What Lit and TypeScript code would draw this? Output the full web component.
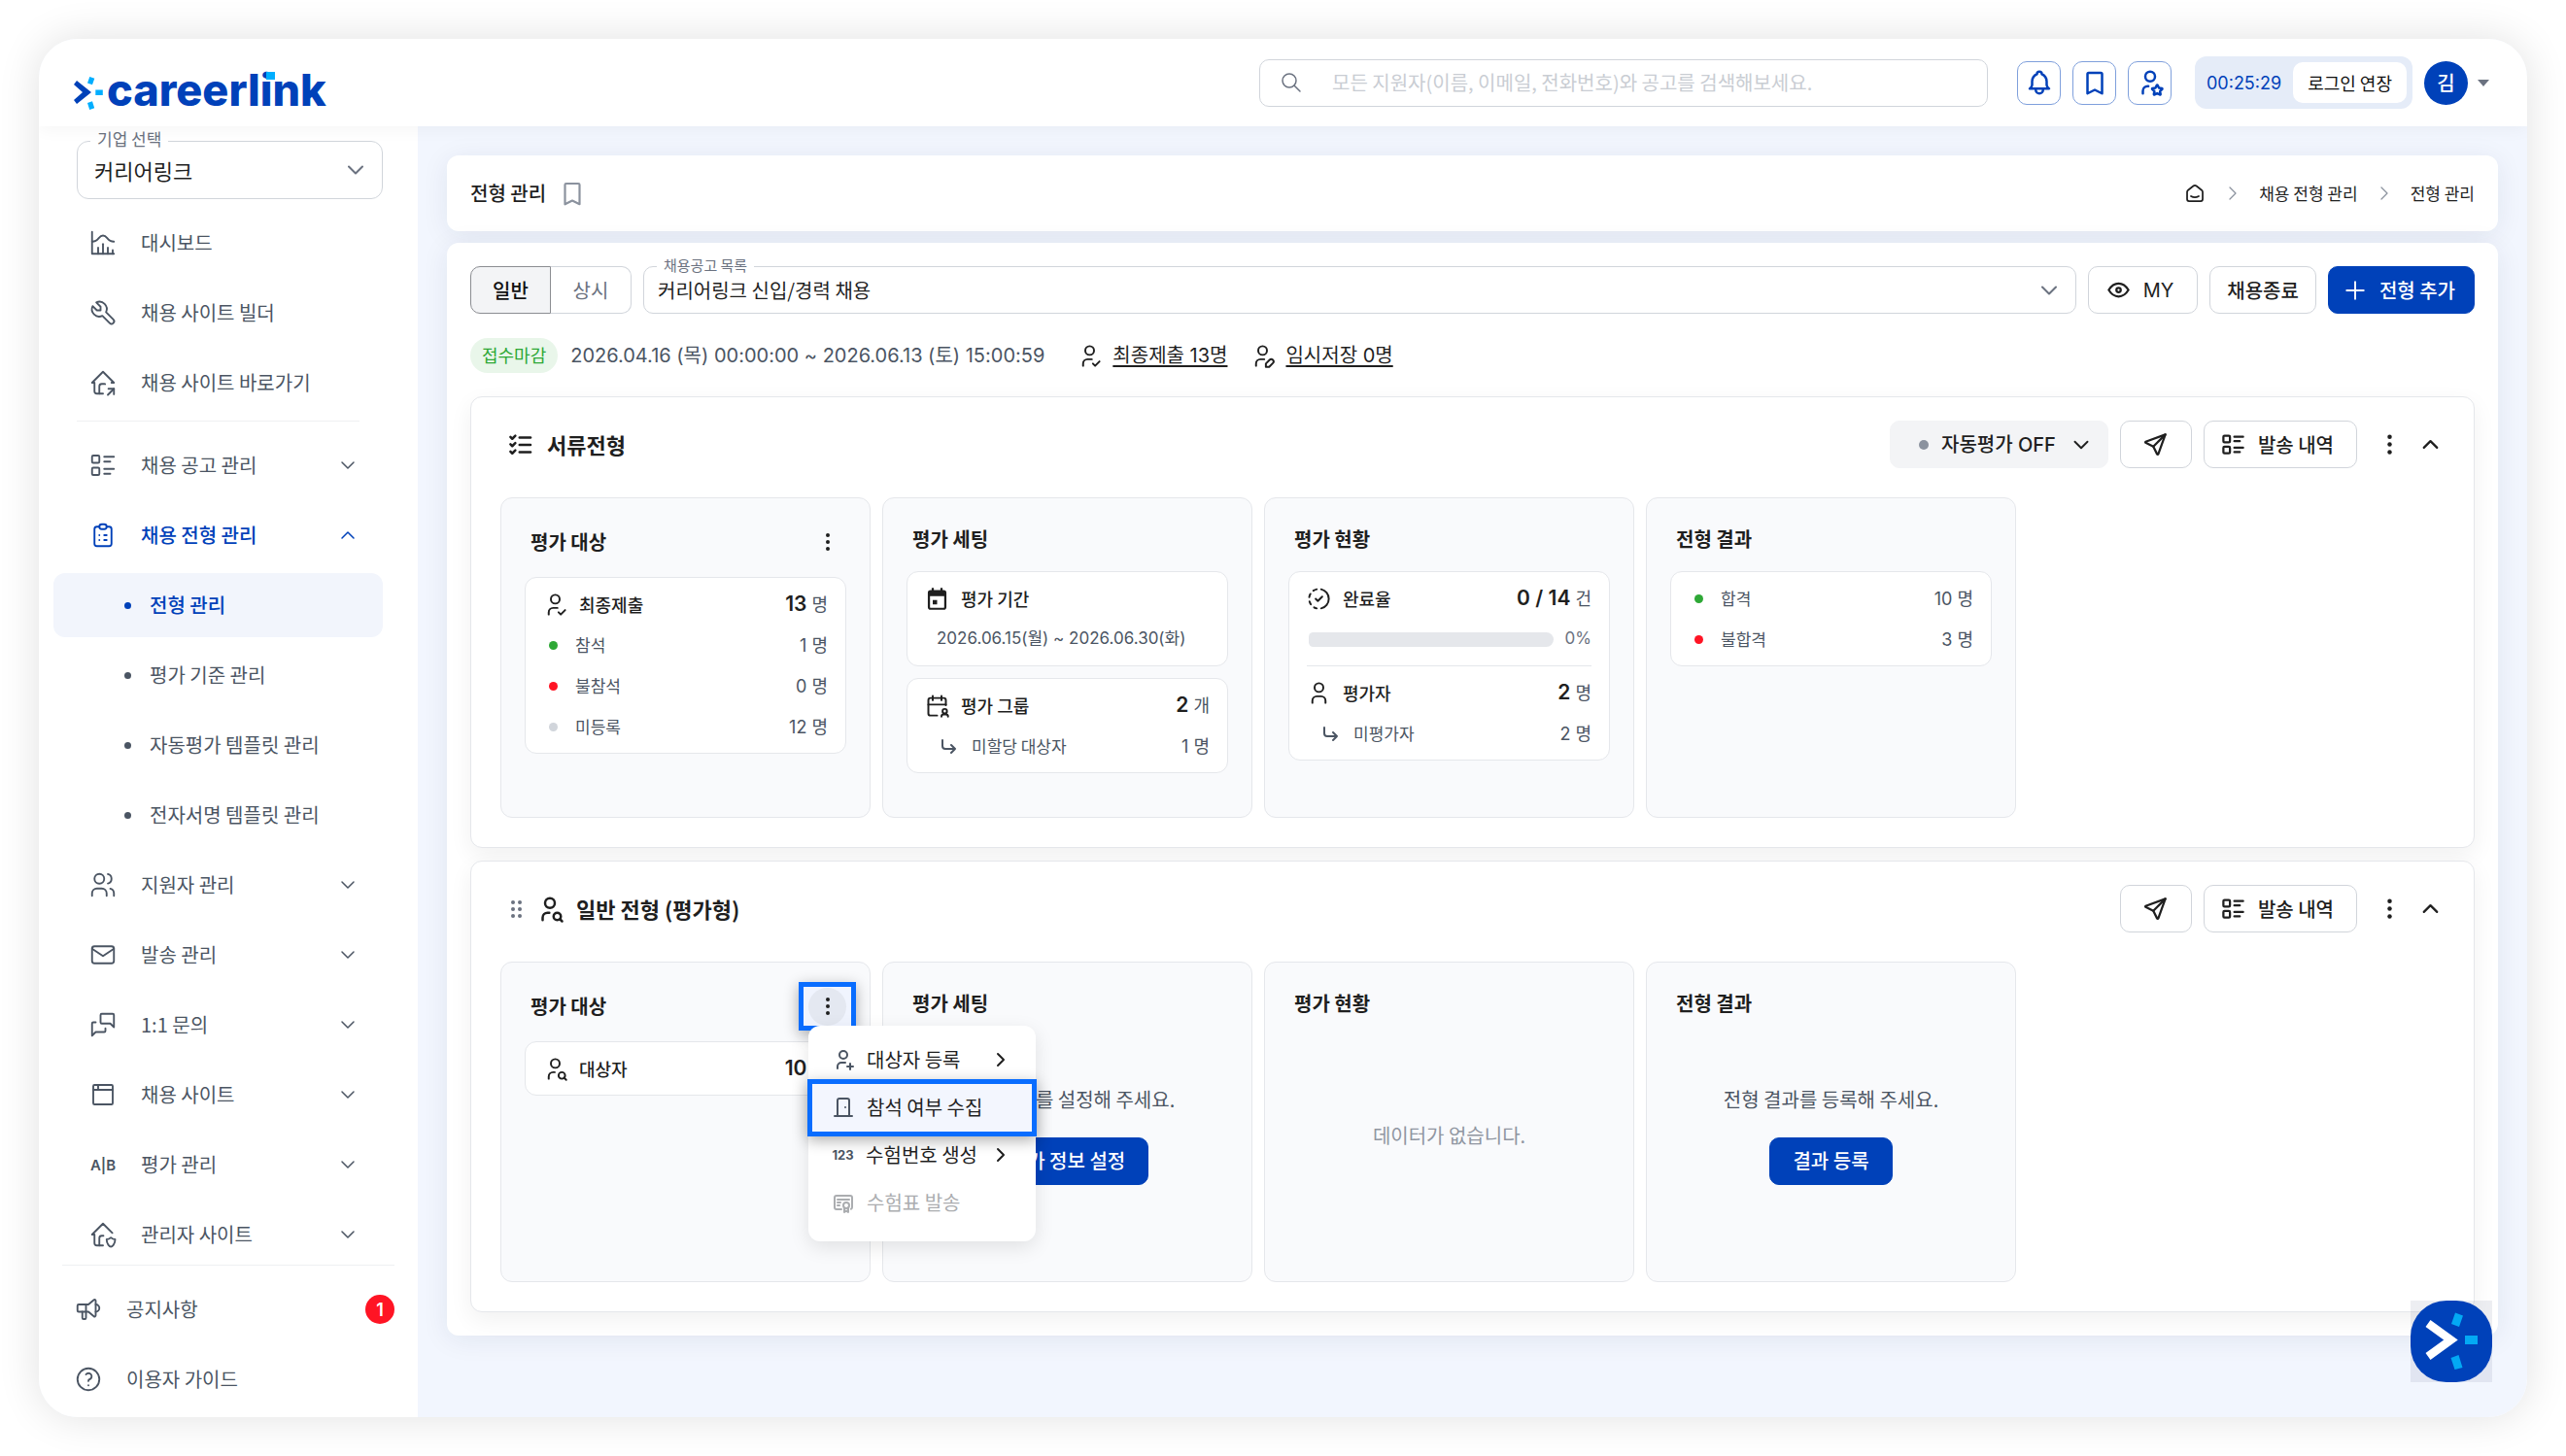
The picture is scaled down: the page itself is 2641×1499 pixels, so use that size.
import { LitElement, html, css, svg, nothing, TemplateResult } from "lit";
import { customElement, property } from "lit/decorators.js";
import { classMap } from "lit/directives/class-map.js";
import { styleMap } from "lit/directives/style-map.js";

const USER_HEAD = "M8 7a4 4 0 1 0 8 0a4 4 0 0 0 -8 0";

const ICONS: Record<string, string[]> = {
  chart: ["M3 3v18h18", "M20 18v3", "M16 16v5", "M12 13v8", "M8 16v5", "M3 11c6 0 5 -5 9 -5s3 5 9 5"],
  tool: ["M7 10h3v-3l-3.5 -3.5a6 6 0 0 1 8 8l6 6a2 2 0 0 1 -3 3l-6 -6a6 6 0 0 1 -8 -8l3.5 3.5"],
  homeShare: [
    "M9 21v-6a2 2 0 0 1 2 -2h2c.247 0 .484 .045 .702 .127",
    "M19 12h2l-9 -9l-9 9h2v7a2 2 0 0 0 2 2h5",
    "M16 22l5 -5",
    "M21 21.5v-4.5h-4.5",
  ],
  listDetails: [
    "M13 5h8", "M13 9h5", "M13 15h8", "M13 19h5",
    "M3 5a1 1 0 0 1 1 -1h4a1 1 0 0 1 1 1v4a1 1 0 0 1 -1 1h-4a1 1 0 0 1 -1 -1z",
    "M3 15a1 1 0 0 1 1 -1h4a1 1 0 0 1 1 1v4a1 1 0 0 1 -1 1h-4a1 1 0 0 1 -1 -1z",
  ],
  clipboard: [
    "M9 5h-2a2 2 0 0 0 -2 2v12a2 2 0 0 0 2 2h10a2 2 0 0 0 2 -2v-12a2 2 0 0 0 -2 -2h-2",
    "M9 5a2 2 0 0 1 2 -2h2a2 2 0 0 1 2 2a2 2 0 0 1 -2 2h-2a2 2 0 0 1 -2 -2z",
    "M9 12h.01", "M13 12h2", "M9 16h.01", "M13 16h2",
  ],
  users: [
    "M5 7a4 4 0 1 0 8 0a4 4 0 1 0 -8 0",
    "M3 21v-2a4 4 0 0 1 4 -4h4a4 4 0 0 1 4 4v2",
    "M16 3.13a4 4 0 0 1 0 7.75",
    "M21 21v-2a4 4 0 0 0 -3 -3.85",
  ],
  mail: ["M3 7a2 2 0 0 1 2 -2h14a2 2 0 0 1 2 2v10a2 2 0 0 1 -2 2h-14a2 2 0 0 1 -2 -2z", "M3 7l9 6l9 -6"],
  messages: [
    "M21 14l-3 -3h-7a1 1 0 0 1 -1 -1v-6a1 1 0 0 1 1 -1h9a1 1 0 0 1 1 1v10",
    "M14 15v2a1 1 0 0 1 -1 1h-7l-3 3v-10a1 1 0 0 1 1 -1h2",
  ],
  browser: ["M4 5a1 1 0 0 1 1 -1h14a1 1 0 0 1 1 1v14a1 1 0 0 1 -1 1h-14a1 1 0 0 1 -1 -1z", "M4 8h16", "M8 4v4"],
  homeShield: [
    "M9 21v-6a2 2 0 0 1 2 -2h1.341",
    "M19.682 10.682l-7.682 -7.682l-9 9h2v7a2 2 0 0 0 2 2h5",
    "M22 16c0 4 -2.5 6 -3.5 6s-3.5 -2 -3.5 -6c1 0 2.5 -.5 3.5 -1.5c1 1 2.5 1.5 3.5 1.5z",
  ],
  speaker: [
    "M18 8a3 3 0 0 1 0 6",
    "M10 8v11a1 1 0 0 1 -1 1h-1a1 1 0 0 1 -1 -1v-5",
    "M12 8l4.524 -3.77a.9 .9 0 0 1 1.476 .692v12.156a.9 .9 0 0 1 -1.476 .692l-4.524 -3.77h-8a1 1 0 0 1 -1 -1v-4a1 1 0 0 1 1 -1h8",
  ],
  help: ["M3 12a9 9 0 1 0 18 0a9 9 0 1 0 -18 0", "M12 17v.01", "M12 13.5a1.5 1.5 0 0 1 1 -1.5a2.6 2.6 0 1 0 -3 -4"],
  bell: [
    "M10 5a2 2 0 1 1 4 0a7 7 0 0 1 4 6v3a4 4 0 0 0 2 3h-16a4 4 0 0 0 2 -3v-3a7 7 0 0 1 4 -6",
    "M9 17v1a3 3 0 0 0 6 0v-1",
  ],
  bookmark: ["M7 4h10a1 1 0 0 1 1 1v16l-6 -3l-6 3v-16a1 1 0 0 1 1 -1"],
  userStar: [
    USER_HEAD,
    "M6 21v-2a4 4 0 0 1 4 -4h.5",
    "M17.8 20.817l-2.172 1.138a.392 .392 0 0 1 -.568 -.41l.415 -2.411l-1.757 -1.707a.389 .389 0 0 1 .217 -.665l2.428 -.352l1.086 -2.193a.392 .392 0 0 1 .702 0l1.086 2.193l2.428 .352a.39 .39 0 0 1 .217 .665l-1.757 1.707l.414 2.41a.39 .39 0 0 1 -.567 .411l-2.172 -1.138z",
  ],
  userCheck: [USER_HEAD, "M6 21v-2a4 4 0 0 1 4 -4h4", "M15 19l2 2l4 -4"],
  userEdit: [
    USER_HEAD,
    "M6 21v-2a4 4 0 0 1 4 -4h3.5",
    "M18.42 15.61a2.1 2.1 0 0 1 2.97 2.97l-3.39 3.42h-3v-3l3.42 -3.39z",
  ],
  userSearch: [USER_HEAD, "M6 21v-2a4 4 0 0 1 4 -4h1.5", "M15 18a3 3 0 1 0 6 0a3 3 0 1 0 -6 0", "M20.2 20.2l1.8 1.8"],
  userPlus: [USER_HEAD, "M16 19h6", "M19 16v6", "M6 21v-2a4 4 0 0 1 4 -4h4"],
  user: [USER_HEAD, "M6 21v-2a4 4 0 0 1 4 -4h4a4 4 0 0 1 4 4v2"],
  listCheck: [
    "M3.5 5.5l1.5 1.5l2.5 -2.5", "M3.5 11.5l1.5 1.5l2.5 -2.5", "M3.5 17.5l1.5 1.5l2.5 -2.5",
    "M11 6h9", "M11 12h9", "M11 18h9",
  ],
  send: ["M10 14l11 -11", "M21 3l-6.5 18a.55 .55 0 0 1 -1 0l-3.5 -7l-7 -3.5a.55 .55 0 0 1 0 -1l18 -6.5"],
  down: ["M6 9l6 6l6 -6"],
  up: ["M6 15l6 -6l6 6"],
  right: ["M9 6l6 6l-6 6"],
  eye: [
    "M10 12a2 2 0 1 0 4 0a2 2 0 0 0 -4 0",
    "M21 12c-2.4 4 -5.4 6 -9 6c-3.6 0 -6.6 -2 -9 -6c2.4 -4 5.4 -6 9 -6c3.6 0 6.6 2 9 6",
  ],
  plus: ["M12 5v14", "M5 12h14"],
  calendarUser: [
    "M12 21h-6a2 2 0 0 1 -2 -2v-12a2 2 0 0 1 2 -2h12a2 2 0 0 1 2 2v4.5",
    "M16 3v4", "M8 3v4", "M4 11h16",
    "M17 17a2 2 0 1 0 4 0a2 2 0 1 0 -4 0",
    "M22 22a2 2 0 0 0 -2 -2h-2a2 2 0 0 0 -2 2",
  ],
  progress: [
    "M10 20.777a8.942 8.942 0 0 1 -2.48 -.969",
    "M14 3.223a9.003 9.003 0 0 1 0 17.554",
    "M4.579 17.093a8.961 8.961 0 0 1 -1.227 -2.592",
    "M3.124 10.5c.16 -.95 .468 -1.85 .9 -2.675l.169 -.305",
    "M6.907 4.579a8.954 8.954 0 0 1 3.093 -1.356",
    "M9 12l2 2l4 -4",
  ],
  door: ["M14 12v.01", "M3 21h18", "M6 21v-16a2 2 0 0 1 2 -2h8a2 2 0 0 1 2 2v16"],
  certificate: [
    "M12 15a3 3 0 1 0 6 0a3 3 0 1 0 -6 0",
    "M13 17.5v4.5l2 -1.5l2 1.5v-4.5",
    "M10 19h-5a2 2 0 0 1 -2 -2v-10c0 -1.1 .9 -2 2 -2h14a2 2 0 0 1 2 2v10a2 2 0 0 1 -1 1.73",
    "M6 9h12", "M6 12h3", "M6 15h2",
  ],
  corner: ["M6 6v6a3 3 0 0 0 3 3h10l-4 -4m0 8l4 -4"],
  search: ["M3 10a7 7 0 1 0 14 0a7 7 0 1 0 -14 0", "M21 21l-6 -6"],
  smartHome: [
    "M19 8.71l-5.333 -4.148a2.666 2.666 0 0 0 -3.274 0l-5.334 4.148a2.665 2.665 0 0 0 -1.029 2.105v7.2a2 2 0 0 0 2 2h12a2 2 0 0 0 2 -2v-7.2c0 -.823 -.38 -1.6 -1.03 -2.105",
    "M16 15c-2.21 1.333 -5.792 1.333 -8 0",
  ],
};

const DOTS: Record<string, number[][]> = {
  kebab: [[12, 5], [12, 12], [12, 19]],
  grip: [[9, 5], [9, 12], [9, 19], [16, 5], [16, 12], [16, 19]],
};

function icon(name: string, size = 24, stroke = 2): TemplateResult {
  let body: unknown;
  if (DOTS[name]) {
    body = DOTS[name].map(([x, y]) => svg`<circle cx=${x} cy=${y} r="2" fill="currentColor" stroke="none"></circle>`);
  } else if (name === "calendarFill") {
    body = svg`<path fill="currentColor" stroke="none" fill-rule="evenodd" d="M7 2h2v2h6v-2h2v2h1a2.5 2.5 0 0 1 2.5 2.5v13a2.5 2.5 0 0 1 -2.5 2.5h-12a2.5 2.5 0 0 1 -2.5 -2.5v-13a2.5 2.5 0 0 1 2.5 -2.5h1zM5.500 9.500v10a.8 .8 0 0 0 .8 .8h11.400a.8 .8 0 0 0 .8 -.8v-10zM8 13h4v4h-4z"></path>`;
  } else {
    body = ICONS[name].map((d) => svg`<path d=${d}></path>`);
  }
  return html`<svg class="ic" width=${size} height=${size} viewBox="0 0 24 24" fill="none" stroke="currentColor"
    stroke-width=${stroke} stroke-linecap="round" stroke-linejoin="round" aria-hidden="true">${body}</svg>`;
}

const base = css`
  * { box-sizing: border-box; }
  button, input, select { font: inherit; color: inherit; margin: 0; }
  button { cursor: pointer; }
  a { color: inherit; text-decoration: none; }
  ul, ol, h1, h2, h3, p { margin: 0; padding: 0; list-style: none; font-size: inherit; font-weight: inherit; }
  .ic { display: block; flex: none; }
  .latin { font-family: Inter, "Noto Sans CJK KR", sans-serif; }
  .btn {
    display: inline-flex; align-items: center; justify-content: center;
    height: 49px; padding: 0 17px; border: 1px solid #d1d5db; border-radius: 10px;
    background: #fff; color: #1f1f1f; font-size: 20px; font-weight: 500; white-space: nowrap;
  }
  .primary { background: #0041b9; border-color: #0041b9; color: #fff; }
  .ghost {
    display: inline-flex; align-items: center; justify-content: center;
    width: 39px; height: 39px; padding: 0; border: 0; border-radius: 50%; background: none; color: #1f1f1f;
  }
`;

/* ---------- header ---------- */
@customElement("top-bar")
export class TopBar extends LitElement {
  static styles = [base, css`
    :host {
      display: flex; align-items: center; height: 90px; flex: none; padding: 0 39px 0 35px;
      background: #fff; position: relative; z-index: 3; box-shadow: 0 4px 16px rgba(0, 0, 0, 0.04);
    }
    .logo { display: block; margin-right: auto; padding-top: 22px; }
    .logo svg { display: block; overflow: visible; }
    .word { font: 800 45px Inter, sans-serif; fill: #0041b9; }
    .search {
      display: flex; align-items: center; width: 750px; height: 49px; margin-right: 30px; padding: 0 20px;
      gap: 30px; border: 1px solid #d1d5db; border-radius: 10px; color: #6b7280;
    }
    .search input { flex: 1; min-width: 0; padding: 0; border: 0; outline: 0; background: none; font-size: 20px; color: #1f1f1f; }
    .search input::placeholder { color: #c9cdd3; opacity: 1; }
    .tools { display: flex; gap: 12px; margin-right: 24px; }
    .tool {
      display: flex; align-items: center; justify-content: center; width: 45px; height: 45px; padding: 0;
      border: 1px solid #7fa0dc; border-radius: 10px; background: #fff; color: #0041b9;
    }
    .session {
      display: flex; align-items: center; gap: 12px; height: 54px; padding: 0 6px 0 12px; margin-right: 12px;
      border-radius: 12px; background: #e5ecf8; color: #0041b9; font-size: 18px;
    }
    .extend {
      height: 42px; padding: 0 15px; border: 0; border-radius: 10px; background: #fff; color: #111;
      font-size: 18px;
    }
    .me { display: flex; align-items: center; gap: 10px; padding: 0; border: 0; background: none; color: #6b7280; }
    .avatar {
      display: flex; align-items: center; justify-content: center; width: 45px; height: 45px;
      border-radius: 50%; background: #0041b9; color: #fff; font-size: 20px; font-weight: 500;
    }
  `];
  render() {
    return html`
      <a class="logo" href="#" aria-label="careerlink">
        <svg width="280" height="48" viewBox="0 0 280 48">
          <path d="M4 11L19 23L4 35L1 31L10 23L1 15Z" fill="#0041b9"></path>
          <path d="M17.300 7l5 1.700l-2.300 6.600l-5 -1.700zM23.300 20.500h7.500v5.500h-7.500zM15 34l5 -1.700l2.200 7l-5 1.700z" fill="#00aeff"></path>
          <text class="word" x="35" y="37">careerlink</text>
          <rect x="199" y="2" width="9" height="8" fill="#00aeff"></rect>
        </svg>
      </a>
      <label class="search">${icon("search", 24, 1.5)}
        <input type="search" aria-label="통합 검색" placeholder="모든 지원자(이름, 이메일, 전화번호)와 공고를 검색해보세요." />
      </label>
      <div class="tools">
        <button class="tool" aria-label="알림">${icon("bell", 30, 2)}</button>
        <button class="tool" aria-label="북마크">${icon("bookmark", 30, 2)}</button>
        <button class="tool" aria-label="관심 지원자">${icon("userStar", 30, 2)}</button>
      </div>
      <div class="session"><span class="latin">00:25:29</span><button class="extend">로그인 연장</button></div>
      <button class="me" aria-label="내 계정">
        <span class="avatar">김</span>
        <svg class="ic" width="12" height="7" viewBox="0 0 12 7"><path d="M0 0h12l-6 7z" fill="currentColor"></path></svg>
      </button>
    `;
  }
}

/* ---------- sidebar ---------- */
interface NavItem { label: string; icon?: string; glyph?: string; open?: boolean; fold?: boolean; sub?: boolean; active?: boolean; line?: boolean }

const NAV: NavItem[] = [
  { label: "대시보드", icon: "chart" },
  { label: "채용 사이트 빌더", icon: "tool" },
  { label: "채용 사이트 바로가기", icon: "homeShare" },
  { label: "", line: true },
  { label: "채용 공고 관리", icon: "listDetails", fold: true },
  { label: "채용 전형 관리", icon: "clipboard", fold: true, open: true },
  { label: "전형 관리", sub: true, active: true },
  { label: "평가 기준 관리", sub: true },
  { label: "자동평가 템플릿 관리", sub: true },
  { label: "전자서명 템플릿 관리", sub: true },
  { label: "지원자 관리", icon: "users", fold: true },
  { label: "발송 관리", icon: "mail", fold: true },
  { label: "1:1 문의", icon: "messages", fold: true },
  { label: "채용 사이트", icon: "browser", fold: true },
  { label: "평가 관리", glyph: "A|B", fold: true },
  { label: "관리자 사이트", icon: "homeShield", fold: true },
];

@customElement("side-nav")
export class SideNav extends LitElement {
  static styles = [base, css`
    :host { display: flex; flex-direction: column; width: 390px; flex: none; background: #fff; color: #4b5563; font-size: 20px; }
    nav { flex: 1; min-height: 0; overflow-y: auto; scrollbar-width: none; padding: 15px 36px 0 15px; }
    .company { position: relative; display: block; margin: 0 0 12px 24px; color: #6b7280; }
    .company label { position: absolute; left: 14px; top: -14px; padding: 0 7px; background: #fff; font-size: 17px; line-height: 24px; }
    .company select {
      appearance: none; width: 100%; height: 60px; padding: 0 17px; border: 1px solid #d1d5db; border-radius: 12px;
      background: #fff; color: #1f1f1f; font-size: 22px;
    }
    .company .ic { position: absolute; right: 14px; top: 16px; pointer-events: none; }
    ul { display: flex; flex-direction: column; gap: 6px; }
    .item { display: flex; align-items: center; height: 66px; padding: 0 24px 0 36px; gap: 24px; border-radius: 12px; }
    .item .tail { margin-left: auto; }
    .open { color: #0041b9; font-weight: 500; }
    .sub { padding-left: 73px; gap: 19px; }
    .sub::before { content: ""; width: 7px; height: 7px; border-radius: 50%; background: currentColor; }
    .active { background: #f2f5fc; color: #0041b9; font-weight: 500; }
    .line { height: 1px; margin: 0 24px 6px; background: #eff0f2; }
    .glyph { width: 30px; text-align: center; font: 600 15px Inter, sans-serif; white-space: nowrap; }
    .foot { margin: 0 24px; padding: 12px 0 6px; border-top: 1px solid #eff0f2; }
    .foot .item { padding: 0 0 0 12px; gap: 24px; }
    .count {
      display: flex; align-items: center; justify-content: center; width: 30px; height: 30px; border-radius: 50%;
      background: #ff1424; color: #fff; font-size: 18px; font-weight: 600;
    }
  `];
  render() {
    return html`
      <nav aria-label="주 메뉴">
        <div class="company">
          <select id="company"><option>커리어링크</option></select>
          <label for="company">기업 선택</label>
          ${icon("down", 28, 1.75)}
        </div>
        <ul>
          ${NAV.map((n) => n.line
            ? html`<li class="line"></li>`
            : html`<li><a href="#" class=${classMap({ item: true, sub: !!n.sub, active: !!n.active, open: !!n.open })}>
                ${n.icon ? icon(n.icon, 30, 1.5) : n.glyph ? html`<span class="glyph">${n.glyph}</span>` : nothing}
                <span>${n.label}</span>
                ${n.fold ? html`<span class="tail">${icon(n.open ? "up" : "down", 24, 1.5)}</span>` : nothing}
              </a></li>`)}
        </ul>
      </nav>
      <ul class="foot">
        <li><a href="#" class="item">${icon("speaker", 30, 1.5)}<span>공지사항</span><span class="tail count latin">1</span></a></li>
        <li><a href="#" class="item">${icon("help", 30, 1.5)}<span>이용자 가이드</span></a></li>
      </ul>
    `;
  }
}

/* ---------- stage card ---------- */
interface Row { label: string; value?: string; unit?: string; icon?: string; dot?: string; child?: boolean }

@customElement("stage-card")
export class StageCard extends LitElement {
  @property() name = "";
  @property() symbol = "";
  @property({ type: Boolean }) draggableStage = false;
  @property({ type: Boolean }) auto = false;

  static styles = [base, css`
    :host {
      display: block; padding: 24px 24px 30px 30px; border: 1px solid #e5e7eb; border-radius: 12px;
      background: #fff; box-shadow: 0 8px 24px rgba(0, 0, 0, 0.06);
    }
    header { display: flex; align-items: center; height: 49px; margin-bottom: 30px; padding-left: 6px; }
    .grip { display: flex; width: 20px; margin-right: 10px; justify-content: center; color: #6b7280; }
    h2 { margin-left: 12px; margin-right: auto; font-size: 22px; font-weight: 600; color: #1f1f1f; }
    .actions { display: flex; align-items: center; gap: 12px; }
    .auto { padding: 0 14px 0 29px; gap: 13px; border-color: #f3f4f6; background: #f3f4f6; }
    .auto::before { content: ""; width: 10px; height: 10px; border-radius: 50%; background: #8b929e; }
    .send { width: 74px; padding: 0; }
    .history { padding: 0 23px 0 16px; gap: 12px; }
    .more { display: flex; }
    .more .ghost { width: 42px; height: 42px; }
    .panels { display: flex; gap: 12px; }
  `];
  render() {
    return html`
      <header>
        ${this.draggableStage ? html`<span class="grip">${icon("grip", 24)}</span>` : nothing}
        ${icon(this.symbol, 30, 2)}
        <h2>${this.name}</h2>
        <div class="actions">
          ${this.auto ? html`<button class="btn auto latin">자동평가 OFF ${icon("down", 26, 1.75)}</button>` : nothing}
          <button class="btn send" aria-label="발송">${icon("send", 27, 2)}</button>
          <button class="btn history">${icon("listDetails", 27, 2)}발송 내역</button>
          <div class="more">
            <button class="ghost" aria-label="더보기">${icon("kebab", 27)}</button>
            <button class="ghost" aria-label="접기">${icon("up", 27, 2)}</button>
          </div>
        </div>
      </header>
      <div class="panels"><slot></slot></div>
    `;
  }
}

/* ---------- panel inside a stage ---------- */
@customElement("stage-panel")
export class StagePanel extends LitElement {
  @property() name = "";
  @property({ type: Boolean }) menu = false;

  static styles = [base, css`
    :host {
      display: flex; flex-direction: column; width: 381px; min-height: 330px; padding: 24px;
      border: 1px solid #e5e7eb; border-radius: 12px; background: #f9fafc; color: #4b5563;
    }
    .head { display: flex; align-items: center; justify-content: space-between; min-height: 36px; margin-bottom: 15px; padding-left: 6px; }
    h3 { font-size: 20px; font-weight: 600; color: #1f1f1f; }
    .body { display: flex; flex-direction: column; flex: 1; gap: 12px; }
    .tall { min-height: 42px; }
  `];
  render() {
    return html`
      <div class=${classMap({ head: true, tall: this.menu })}><h3>${this.name}</h3><slot name="menu"></slot></div>
      <div class="body"><slot></slot></div>
    `;
  }
}

@customElement("stat-box")
export class StatBox extends LitElement {
  @property({ attribute: false }) rows: Row[] = [];
  @property({ type: Number }) progress = -1;
  @property({ attribute: false }) extra: Row[] = [];
  @property() period = "";

  static styles = [base, css`
    :host { display: block; padding: 6px 18px 6px 17px; border: 1px solid #e5e7eb; border-radius: 12px; background: #fff; color: #4b5563; }
    .row { display: flex; align-items: center; height: 42px; gap: 11px; font-size: 18px; font-weight: 500; color: #1f1f1f; }
    .num { margin-left: auto; font-size: 18px; font-weight: 400; color: #4b5563; white-space: pre; }
    .num b { font-size: 21px; font-weight: 600; color: #1f1f1f; }
    .dotted, .child { font-size: 17px; font-weight: 400; color: #4b5563; }
    .dotted { padding-left: 7px; gap: 18px; }
    .child { padding-left: 13px; gap: 12px; }
    .dot { width: 9px; height: 9px; border-radius: 50%; }
    .green { background: #2ea836; }
    .red { background: #ff1424; }
    .gray { background: #d1d5db; }
    .period { display: flex; align-items: center; height: 42px; padding-left: 13px; font-size: 17px; white-space: nowrap; }
    .meter { display: flex; align-items: center; height: 42px; margin-left: 3px; gap: 12px; font-size: 17px; color: #6b7280; }
    .track { flex: 1; height: 15px; border-radius: 5px 8px 8px 5px; background: #e5e7eb; overflow: hidden; }
    .fill { height: 15px; background: #2ea836; }
    .rule { height: 1px; margin: 6px 0 6px 1px; background: #e5e7eb; }
  `];
  private row(r: Row) {
    if (r.dot || r.child) {
      return html`<div class="row ${r.dot ? "dotted" : "child"}">
        ${r.dot ? html`<span class="dot ${r.dot}"></span>` : icon("corner", 24, 2)}
        <span>${r.label}</span><span class="num latin">${r.value} ${r.unit}</span>
      </div>`;
    }
    return html`<div class="row">${icon(r.icon!, 27, 1.75)}<span>${r.label}</span>
      ${r.value ? html`<span class="num latin"><b>${r.value}</b> ${r.unit}</span>` : nothing}</div>`;
  }
  render() {
    return html`
      ${this.rows.map((r) => this.row(r))}
      ${this.period ? html`<div class="period latin">${this.period}</div>` : nothing}
      ${this.progress >= 0 ? html`<div class="meter latin">
        <div class="track"><div class="fill" style=${styleMap({ width: this.progress + "%" })}></div></div>
        <span>${this.progress}%</span></div>` : nothing}
      ${this.extra.length ? html`<div class="rule"></div>${this.extra.map((r) => this.row(r))}` : nothing}
    `;
  }
}

@customElement("empty-note")
export class EmptyNote extends LitElement {
  @property() text = "";
  @property() action = "";
  static styles = [base, css`
    :host { display: flex; flex: 1; flex-direction: column; align-items: center; justify-content: center; gap: 25px; padding-bottom: 24px; font-size: 20px; }
    p { line-height: 28px; white-space: nowrap; color: #4b5563; }
    .muted { color: #9096a1; }
    .btn { padding: 0 23px; }
  `];
  render() {
    return html`<p class=${classMap({ muted: !this.action })}>${this.text}</p>
      ${this.action ? html`<button class="btn primary">${this.action}</button>` : nothing}`;
  }
}

@customElement("target-menu")
export class TargetMenu extends LitElement {
  static styles = [base, css`
    :host { position: relative; display: block; width: 39px; height: 39px; }
    .ghost { position: relative; background: #e4e8f1; }
    .ring { position: absolute; border: 5px solid #096dff; box-shadow: 0 4px 14px rgba(0, 0, 0, 0.32); pointer-events: none; }
    .trigger { inset: -6px -10px -5px; background: #f0f4fe; }
    .menu {
      position: absolute; z-index: 2; left: 0; top: 39px; width: 234px; padding: 11px 0 15px;
      border-radius: 12px; background: #fff; box-shadow: 0 6px 20px rgba(0, 0, 0, 0.1); color: #1f1f1f; font-size: 20px;
    }
    .entry {
      position: relative; display: flex; align-items: center; width: 100%; height: 49px; padding: 0 24px; gap: 12px;
      border: 0; background: none; text-align: left; white-space: nowrap;
    }
    .entry:disabled { color: #abadb0; cursor: default; }
    .lead { display: flex; width: 24px; justify-content: center; color: #4b5563; }
    .entry:disabled .lead { color: #abadb0; }
    .digits { font: 700 13px Inter, sans-serif; }
    .tail { margin-left: auto; }
    .on { background: #f3f6fe; z-index: 1; }
    .pick { inset: -5px -1px; }
  `];
  render() {
    return html`
      <span class="ring trigger"></span>
      <button class="ghost" aria-label="평가 대상 메뉴" aria-expanded="true">${icon("kebab", 24)}</button>
      <div class="menu" role="menu">
        <button class="entry" role="menuitem"><span class="lead">${icon("userPlus")}</span>대상자 등록<span class="tail">${icon("right")}</span></button>
        <button class="entry on" role="menuitem"><span class="lead">${icon("door")}</span>참석 여부 수집<span class="ring pick"></span></button>
        <button class="entry" role="menuitem"><span class="lead digits">123</span>수험번호 생성<span class="tail">${icon("right")}</span></button>
        <button class="entry" role="menuitem" disabled><span class="lead">${icon("certificate")}</span>수험표 발송</button>
      </div>
    `;
  }
}

/* ---------- page ---------- */
@customElement("app-root")
export class AppRoot extends LitElement {
  static styles = [base, css`
    :host {
      display: block; padding: 40px; background: #fff;
      font-family: "Noto Sans CJK KR", "Noto Sans", sans-serif; font-size: 20px; line-height: 1.5; color: #1f1f1f;
    }
    .frame {
      position: relative; display: flex; flex-direction: column; height: calc(100vh - 80px); overflow: hidden;
      border-radius: 40px; background: #f2f6fe;
    }
    .shadow { border-radius: 40px; box-shadow: 0 0 44px rgba(0, 0, 0, 0.12); }
    .shell { display: flex; flex: 1; min-height: 0; }
    main { display: flex; flex-direction: column; flex: 1; min-width: 0; gap: 12px; padding: 30px; overflow: hidden; }
    .card { border-radius: 12px; background: #fff; box-shadow: 0 4px 28px rgba(30, 40, 80, 0.08); }
    .title { display: flex; align-items: center; height: 78px; padding: 0 24px; }
    h1 { font-size: 20px; font-weight: 500; }
    .mark { display: flex; margin-left: 12px; padding: 0; border: 0; background: none; color: #8b929e; }
    .crumbs { display: flex; align-items: center; gap: 15px; margin-left: auto; font-size: 17px; }
    .crumbs li { display: flex; align-items: center; gap: 15px; }
    .crumbs .sep { color: #8b929e; }
    .board { padding: 24px; }
    .bar { display: flex; align-items: center; gap: 12px; margin-bottom: 25px; }
    .toggle { display: flex; }
    .toggle button { width: 83px; height: 49px; padding: 0; border: 1px solid #d1d5db; background: #fff; color: #6b7280; font-size: 20px; }
    .toggle button:last-child { border-left: 0; border-radius: 0 10px 10px 0; }
    .toggle .on { border-color: #8b8d92; border-radius: 10px 0 0 10px; background: #f3f4f6; color: #111; font-weight: 500; }
    .field { position: relative; flex: 1; color: #6b7280; }
    .field label { position: absolute; left: 14px; top: -13px; padding: 0 7px; background: #fff; font-size: 15px; line-height: 24px; }
    .field select {
      display: block; appearance: none; width: 100%; height: 49px; padding: 0 14px; border: 1px solid #d1d5db; border-radius: 10px;
      background: #fff; color: #1f1f1f; font-size: 20px;
    }
    .field .ic { position: absolute; right: 14px; top: 11px; pointer-events: none; }
    .my { padding: 0 24px 0 17px; gap: 12px; font-weight: 400; }
    .add { padding: 0 19px 0 12px; gap: 10px; }
    .info { display: flex; align-items: center; height: 36px; margin-bottom: 24px; color: #4b5563; }
    .tag { display: flex; align-items: center; height: 36px; padding: 0 12px; margin-right: 13px; border-radius: 18px; background: #e9f6ea; color: #2ea836; font-size: 18px; }
    .span { margin-right: 10px; }
    .stat { display: flex; align-items: center; gap: 10px; margin-left: 23px; color: #1f1f1f; }
    .stat u { text-underline-offset: 3px; }
    .stages { display: flex; flex-direction: column; gap: 13px; }
    .chat {
      position: absolute; right: 36px; bottom: 36px; width: 84px; height: 84px; padding: 0; border: 0;
      background: rgba(60, 70, 110, 0.09);
    }
  `];

  private sep = html`<span class="sep">${icon("right", 24, 1.25)}</span>`;

  render() {
    return html`
      <div class="shadow"><div class="frame">
        <top-bar></top-bar>
        <div class="shell">
          <side-nav></side-nav>
          <main>
            <section class="card title">
              <h1>전형 관리</h1>
              <button class="mark" aria-label="북마크">${icon("bookmark", 30, 1.75)}</button>
              <ol class="crumbs">
                <li><a href="#" aria-label="홈">${icon("smartHome", 24, 1.75)}</a>${this.sep}</li>
                <li><a href="#">채용 전형 관리</a>${this.sep}</li>
                <li><a href="#">전형 관리</a></li>
              </ol>
            </section>
            <section class="card board">
              <div class="bar">
                <div class="toggle"><button class="on">일반</button><button>상시</button></div>
                <div class="field">
                  <select id="posting"><option>커리어링크 신입/경력 채용</option></select>
                  <label for="posting">채용공고 목록</label>
                  ${icon("down", 28, 1.75)}
                </div>
                <button class="btn my latin">${icon("eye", 27, 2)}MY</button>
                <button class="btn">채용종료</button>
                <button class="btn primary add">${icon("plus", 30, 1.5)}전형 추가</button>
              </div>
              <div class="info latin">
                <span class="tag">접수마감</span>
                <span class="span">2026.04.16 (목) 00:00:00 ~ 2026.06.13 (토) 15:00:59</span>
                <a class="stat" href="#">${icon("userCheck", 27, 1.75)}<u>최종제출 13명</u></a>
                <a class="stat" href="#">${icon("userEdit", 27, 1.75)}<u>임시저장 0명</u></a>
              </div>
              <div class="stages">
                <stage-card name="서류전형" symbol="listCheck" auto>
                  <stage-panel name="평가 대상" menu>
                    <button slot="menu" class="ghost" aria-label="더보기">${icon("kebab", 24)}</button>
                    <stat-box .rows=${[
                      { label: "최종제출", icon: "userCheck", value: "13", unit: "명" },
                      { label: "참석", dot: "green", value: "1", unit: "명" },
                      { label: "불참석", dot: "red", value: "0", unit: "명" },
                      { label: "미등록", dot: "gray", value: "12", unit: "명" },
                    ]}></stat-box>
                  </stage-panel>
                  <stage-panel name="평가 세팅">
                    <stat-box .rows=${[{ label: "평가 기간", icon: "calendarFill" }]} period="2026.06.15(월) ~ 2026.06.30(화)"></stat-box>
                    <stat-box .rows=${[
                      { label: "평가 그룹", icon: "calendarUser", value: "2", unit: "개" },
                      { label: "미할당 대상자", child: true, value: "1", unit: "명" },
                    ]}></stat-box>
                  </stage-panel>
                  <stage-panel name="평가 현황">
                    <stat-box .rows=${[{ label: "완료율", icon: "progress", value: "0 / 14", unit: "건" }]} .progress=${0}
                      .extra=${[
                        { label: "평가자", icon: "user", value: "2", unit: "명" },
                        { label: "미평가자", child: true, value: "2", unit: "명" },
                      ]}></stat-box>
                  </stage-panel>
                  <stage-panel name="전형 결과">
                    <stat-box .rows=${[
                      { label: "합격", dot: "green", value: "10", unit: "명" },
                      { label: "불합격", dot: "red", value: "3", unit: "명" },
                    ]}></stat-box>
                  </stage-panel>
                </stage-card>
                <stage-card name="일반 전형 (평가형)" symbol="userSearch" .draggableStage=${true}>
                  <stage-panel name="평가 대상" menu>
                    <target-menu slot="menu"></target-menu>
                    <stat-box .rows=${[{ label: "대상자", icon: "userSearch", value: "10", unit: "명" }]}></stat-box>
                  </stage-panel>
                  <stage-panel name="평가 세팅"><empty-note text="평가 정보를 설정해 주세요." action="평가 정보 설정"></empty-note></stage-panel>
                  <stage-panel name="평가 현황"><empty-note text="데이터가 없습니다."></empty-note></stage-panel>
                  <stage-panel name="전형 결과"><empty-note text="전형 결과를 등록해 주세요." action="결과 등록"></empty-note></stage-panel>
                </stage-card>
              </div>
            </section>
          </main>
        </div>
        <button class="chat" aria-label="채팅 상담">
          <svg class="ic" width="84" height="84" viewBox="0 0 84 84">
            <rect width="84" height="84" rx="37" fill="#0041b9"></rect>
            <path d="M18 23.500L41.500 40.500L18 57.500" fill="none" stroke="#fff" stroke-width="8.500"></path>
            <path d="M46 12.500l8 3l-4 11.500l-8 -3zM56 36h13v9h-13zM41.500 59l8 -3l4 13l-8 2z" fill="#03a9f4"></path>
          </svg>
        </button>
      </div></div>
    `;
  }
}
